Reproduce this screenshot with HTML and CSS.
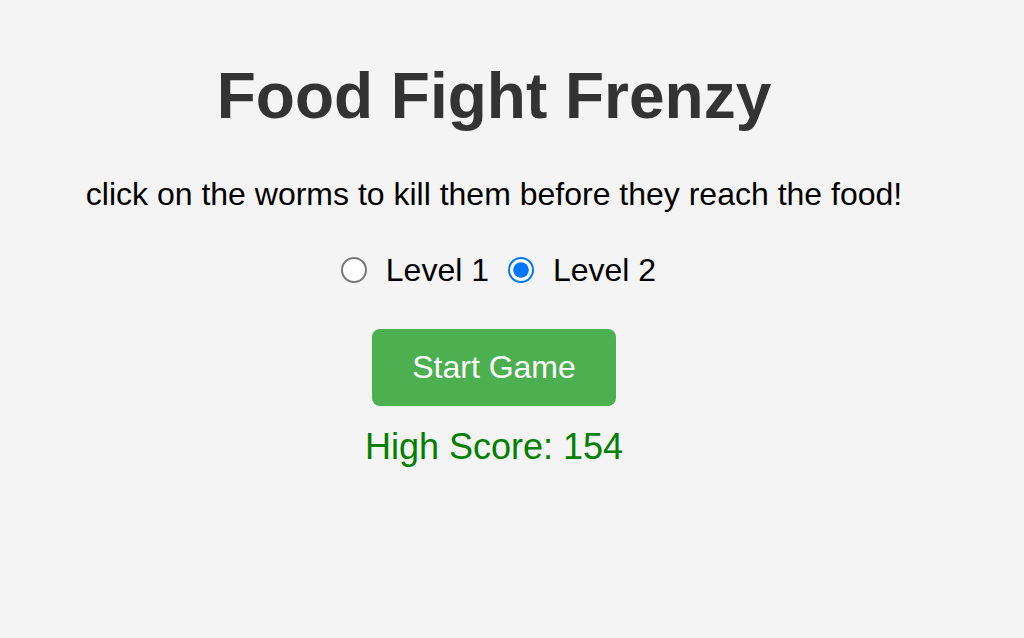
FILE: index.html
```html
<!DOCTYPE html>
<html>
<head>
<meta charset="utf-8">
<link rel="stylesheet" href="styles.css">
</head>
<body>
<main class="menu">
  <h1 class="title">Food Fight Frenzy</h1>
  <p class="instructions">click on the worms to kill them before they reach the food!</p>
  <div class="levels">
    <label class="level"><input type="radio" name="level" class="radio"> Level 1</label>
    <label class="level"><input type="radio" name="level" class="radio" checked> Level 2</label>
  </div>
  <button class="start">Start Game</button>
  <div class="score">High Score: 154</div>
</main>
</body>
</html>
```
FILE: styles.css
```css
html, body {
  margin: 0;
  padding: 0;
  background: #f4f4f4;
  font-family: "Liberation Sans", Arial, sans-serif;
}
.menu {
  width: 988px;
  display: flex;
  flex-direction: column;
  align-items: center;
  padding-top: 56px;
}
.title {
  margin: 0;
  font-size: 64px;
  font-weight: bold;
  color: #333;
  line-height: 80px;
}
.instructions {
  margin: 40px 0 0;
  font-size: 32px;
  line-height: 36px;
  color: #000;
}
.levels {
  margin: 40px 0 0 9px;
  display: flex;
  gap: 19px;
  font-size: 32px;
  line-height: 36px;
}
.level {
  display: flex;
  align-items: center;
  white-space: pre;
}
.radio {
  zoom: 2;
  margin: 0 5px 0 0;
}
.start {
  margin-top: 41px;
  width: 244px;
  height: 77px;
  background: #4caf50;
  color: #fff;
  border: none;
  border-radius: 8px;
  font-family: "Liberation Sans", Arial, sans-serif;
  font-size: 32px;
}
.score {
  margin-top: 21px;
  font-size: 36px;
  line-height: 40px;
  color: #008000;
}
```
